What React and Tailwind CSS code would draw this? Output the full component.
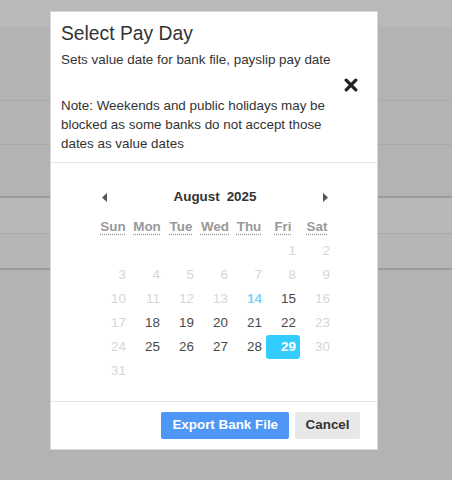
import React from 'react';

const days = ['Sun', 'Mon', 'Tue', 'Wed', 'Thu', 'Fri', 'Sat'];
const enabled = [15, 18, 19, 20, 21, 22, 25, 26, 27, 28, 29];

function buildWeeks() {
  // August 2025 starts on a Friday
  const cells = [null, null, null, null, null];
  for (let d = 1; d <= 31; d++) cells.push(d);
  while (cells.length % 7 !== 0) cells.push(null);
  const weeks = [];
  for (let i = 0; i < cells.length; i += 7) weeks.push(cells.slice(i, i + 7));
  return weeks;
}

function DayCell({ day }) {
  if (!day) return <div className="w-[34px] h-[24px]" />;
  if (day === 29) {
    return (
      <div className="w-[34px] h-[24px] flex items-center justify-end pr-[4px] rounded-[3px] bg-[#33ccff] text-white font-bold">
        {day}
      </div>
    );
  }
  if (day === 14) {
    return (
      <div className="w-[34px] h-[24px] flex items-center justify-end pr-[4px] font-bold text-[#7dd6f8]">
        {day}
      </div>
    );
  }
  const on = enabled.includes(day);
  return (
    <div className={'w-[34px] h-[24px] flex items-center justify-end pr-[4px] ' + (on ? 'text-[#484848]' : 'text-[#d6d6d6]')}>
      {day}
    </div>
  );
}

export default function App() {
  const weeks = buildWeeks();

  return (
    <div className="relative w-full h-[480px] bg-[#b3b3b3] overflow-hidden" style={{ fontFamily: '"Liberation Sans", Arial, sans-serif' }}>

      {/* page behind the overlay */}
      <div className="h-[27px] bg-[#b9b9b9]" />
      <div className="h-[74px] border-b border-[#a9a9a9]" />
      <div className="h-[44px] border-b border-[#a9a9a9]" />
      <div className="h-[53px] border-b-2 border-[#9c9c9c]" />
      <div className="h-[36px] bg-[#b8b8b8] border-b border-[#a6a6a6]" />
      <div className="h-[36px] bg-[#b6b6b6] border-b-2 border-[#9c9c9c]" />

      {/* modal */}
      <div className="absolute left-[50px] top-[11px] w-[328px] bg-white border border-[#d8d8d8] text-[13.4px] text-[#333]">
        <div className="px-[10px] pt-[10px] pb-[9px] border-b border-[#e5e5e5]">
          <h3 className="text-[19.3px] leading-[24px] text-[#333]">Select Pay Day</h3>
          <p className="mt-[4px] leading-[19px]">Sets value date for bank file, payslip pay date</p>
          <div className="h-[27px] flex justify-end items-start pt-[9px] pr-[9px]">
            <svg width="14" height="14" viewBox="0 0 14 14">
              <path d="M2.2 2.2 L11.8 11.8 M11.8 2.2 L2.2 11.8" stroke="#222" strokeWidth="3.3" strokeLinecap="round" />
            </svg>
          </div>
          <p className="w-[290px] leading-[19px]">
            Note: Weekends and public holidays may be blocked as some banks do not accept those dates as value dates
          </p>
        </div>

        <div className="pt-[22px] pb-[18px] pl-[2px]">
          <div className="w-[238px] mx-auto">
            <div className="h-[24px] flex items-center justify-between px-[6px]">
              <svg width="5" height="9" viewBox="0 0 5 9">
                <path d="M5 0 L0 4.5 L5 9 Z" fill="#555" />
              </svg>
              <div className="flex gap-[7px] font-bold text-[#333]">
                <span>August</span>
                <span>2025</span>
              </div>
              <svg width="5" height="9" viewBox="0 0 5 9">
                <path d="M0 0 L5 4.5 L0 9 Z" fill="#555" />
              </svg>
            </div>
            <div className="mt-[6px] grid grid-cols-7">
              {days.map(d => (
                <div key={d} className="h-[24px] flex items-center justify-center">
                  <abbr title={d} className="font-bold text-[#999] underline decoration-dotted decoration-[#999] underline-offset-[3px]">{d}</abbr>
                </div>
              ))}
            </div>
            {weeks.map((week, i) => (
              <div key={i} className="grid grid-cols-7">
                {week.map((day, j) => <DayCell key={j} day={day} />)}
              </div>
            ))}
          </div>
        </div>

        <div className="border-t border-[#e5e5e5] pt-[10px] pb-[10px] pr-[17px] flex justify-end gap-[6px]">
          <button className="h-[27px] px-[11px] rounded-[2px] bg-[#4e97f7] text-white font-bold">Export Bank File</button>
          <button className="h-[27px] px-[10.5px] rounded-[2px] bg-[#e8e8e8] text-[#333] font-bold">Cancel</button>
        </div>
      </div>
    </div>
  );
}
